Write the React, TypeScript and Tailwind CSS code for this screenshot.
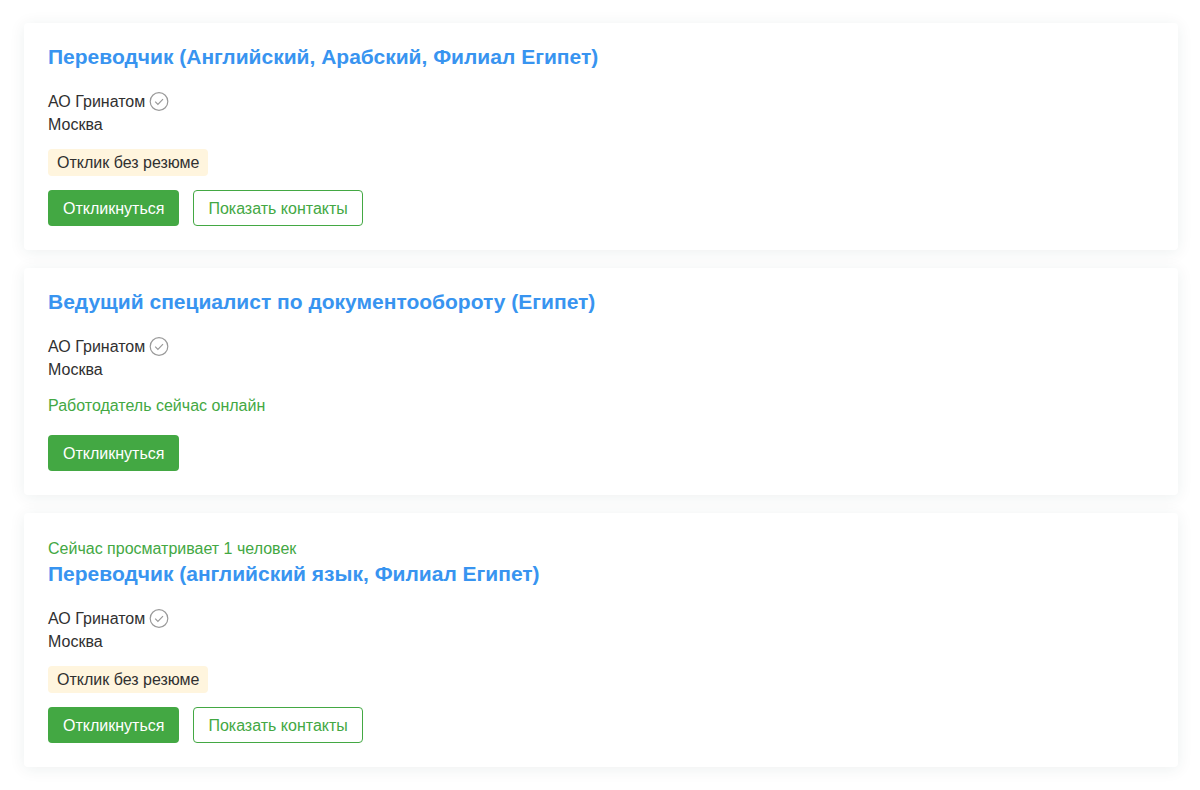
type Vacancy = {
    id: number;
    title: string;
    company: string;
    city: string;
    viewers?: string;
    noResume?: boolean;
    online?: boolean;
    contacts?: boolean;
};

const vacancies: Vacancy[] = [
    {
        id: 1,
        title: "Переводчик (Английский, Арабский, Филиал Египет)",
        company: "АО Гринатом",
        city: "Москва",
        noResume: true,
        contacts: true,
    },
    {
        id: 2,
        title: "Ведущий специалист по документообороту (Египет)",
        company: "АО Гринатом",
        city: "Москва",
        online: true,
    },
    {
        id: 3,
        title: "Переводчик (английский язык, Филиал Египет)",
        company: "АО Гринатом",
        city: "Москва",
        viewers: "Сейчас просматривает 1 человек",
        noResume: true,
        contacts: true,
    },
];

function VerifiedIcon() {
    return (
        <svg className="size-5" viewBox="0 0 20 20" fill="none" stroke="#999999" strokeWidth="1.2" aria-hidden="true">
            <circle cx="10" cy="9.5" r="8.8" />
            <path d="M6.2 9.6l2.7 2.7 5.1-5.1" />
        </svg>
    );
}

function VacancyCard({ vacancy }: { vacancy: Vacancy }) {
    return (
        <article className="rounded bg-white px-6 pt-5 pb-6 shadow-[0_2px_16px_rgba(30,70,60,0.08)]">
            {vacancy.viewers && <p className="mt-1 text-[#43a843]">{vacancy.viewers}</p>}
            <h2 className="text-[21px] leading-7 font-bold">
                <a href="#" className="text-[#3894f0]">{vacancy.title}</a>
            </h2>

            <div className="mt-[19px]">
                <div className="flex items-center gap-1">
                    <a href="#">{vacancy.company}</a>
                    <VerifiedIcon />
                </div>
                <p>{vacancy.city}</p>
            </div>

            {vacancy.noResume && (
                <div className="mt-[13px] flex">
                    <span className="rounded bg-[#fff5de] px-[9px] py-0.5">Отклик без резюме</span>
                </div>
            )}
            {vacancy.online && <p className="mt-[13px] pb-1 text-[#43a843]">Работодатель сейчас онлайн</p>}

            <div className="mt-3.5 flex gap-3.5">
                <button type="button" className="h-9 rounded bg-[#43a843] px-[15px] text-white">
                    Откликнуться
                </button>
                {vacancy.contacts && (
                    <button type="button" className="h-9 rounded border border-[#43a843] px-3.5 text-[#43a843]">
                        Показать контакты
                    </button>
                )}
            </div>
        </article>
    );
}

export default function App() {
    return (
        <main className="flex flex-col gap-[18px] bg-white py-[23px] pr-[22px] pl-6 font-['Liberation_Sans',Arial,sans-serif] text-base leading-[23px] text-[#303030]">
            {vacancies.map((vacancy) => (
                <VacancyCard key={vacancy.id} vacancy={vacancy} />
            ))}
        </main>
    );
}
